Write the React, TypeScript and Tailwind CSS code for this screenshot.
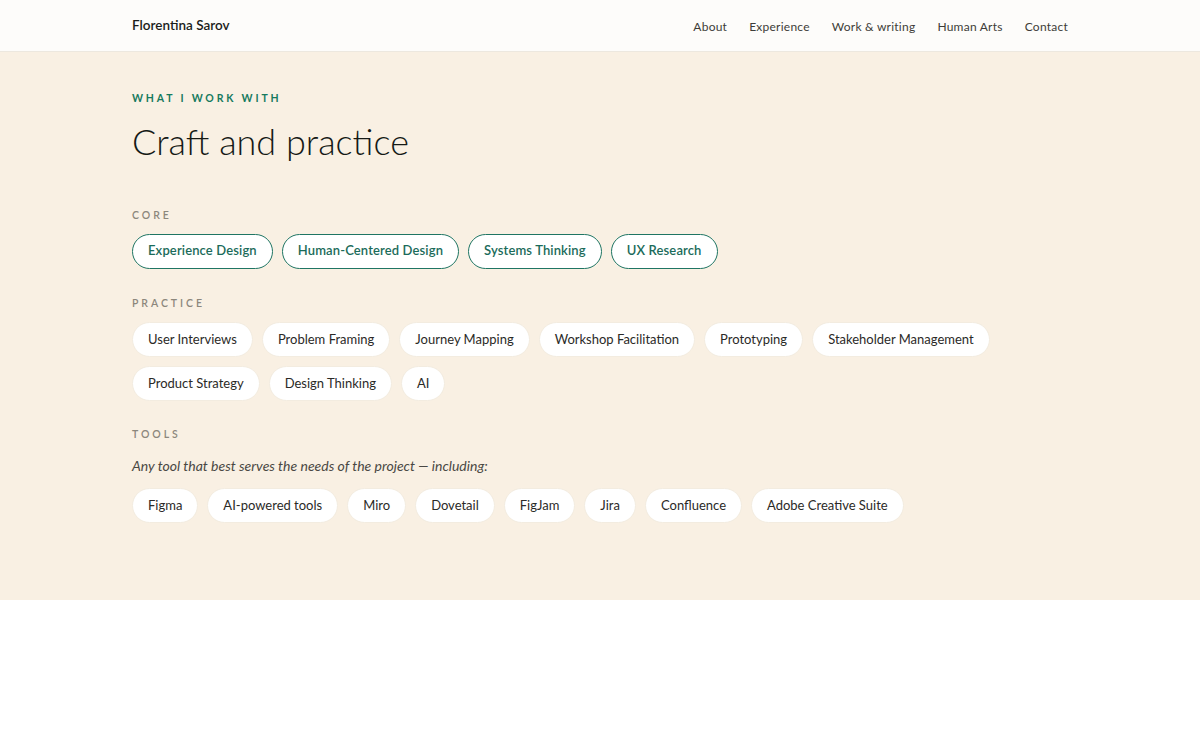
const core = ["Experience Design", "Human-Centered Design", "Systems Thinking", "UX Research"]

const practice = [
  "User Interviews",
  "Problem Framing",
  "Journey Mapping",
  "Workshop Facilitation",
  "Prototyping",
  "Stakeholder Management",
  "Product Strategy",
  "Design Thinking",
  "AI",
]

const tools = [
  "Figma",
  "AI-powered tools",
  "Miro",
  "Dovetail",
  "FigJam",
  "Jira",
  "Confluence",
  "Adobe Creative Suite",
]

const navLinks = ["About", "Experience", "Work & writing", "Human Arts", "Contact"]

function GroupLabel({ children }: { children: React.ReactNode }) {
  return (
    <p className="text-[10.5px] font-semibold uppercase tracking-[0.28em] text-[#8c877c]">
      {children}
    </p>
  )
}

function Pill({ label, accent = false }: { label: string; accent?: boolean }) {
  return (
    <span
      className={
        accent
          ? "flex h-[35px] items-center rounded-full border border-[#1f7563] bg-white px-[15px] text-[13px] font-semibold tracking-[0.01em] text-[#1b6b5a]"
          : "flex h-[35px] items-center rounded-full border border-[#f3ece0] bg-white px-[15px] text-[13px] text-[#2b2a27]"
      }
    >
      {label}
    </span>
  )
}

export default function App() {
  return (
    <div className="min-h-screen bg-white font-['Lato',sans-serif]">
      <header className="h-[52px] border-b border-[#ede8df] bg-[#fdfcfa]">
        <div className="mx-auto flex h-full max-w-[936px] items-center justify-between">
          <span className="text-[13.5px] font-semibold text-[#1b1c1a]">
            Florentina Sarov
          </span>
          <nav className="flex items-center gap-[22px] pt-[2px]">
            {navLinks.map((link) => (
              <a key={link} className="text-[12px] tracking-[0.02em] text-[#3d3c38]">
                {link}
              </a>
            ))}
          </nav>
        </div>
      </header>

      <section className="bg-[#f9f0e3] pb-[77px] pt-[39px]">
        <div className="mx-auto max-w-[936px]">
          <p className="text-[10.5px] font-bold uppercase tracking-[0.27em] text-[#167a5e]">
            What I work with
          </p>
          <h2 className="mt-[12px] text-[36px] font-light leading-[44px] text-[#161a16]">
            Craft and practice
          </h2>

          <div className="mt-[45px]">
            <GroupLabel>Core</GroupLabel>
            <div className="mt-[10px] flex flex-wrap gap-[9px]">
              {core.map((item) => (
                <Pill key={item} label={item} accent />
              ))}
            </div>
          </div>

          <div className="mt-[27px]">
            <GroupLabel>Practice</GroupLabel>
            <div className="mt-[11px] flex flex-wrap gap-x-[9px] gap-y-[9px]">
              {practice.map((item) => (
                <Pill key={item} label={item} />
              ))}
            </div>
          </div>

          <div className="mt-[26px]">
            <GroupLabel>Tools</GroupLabel>
            <p className="mt-[12px] text-[14px] italic text-[#4a4843]">
              Any tool that best serves the needs of the project — including:
            </p>
            <div className="mt-[12px] flex flex-wrap gap-[9px]">
              {tools.map((item) => (
                <Pill key={item} label={item} />
              ))}
            </div>
          </div>
        </div>
      </section>
    </div>
  )
}
